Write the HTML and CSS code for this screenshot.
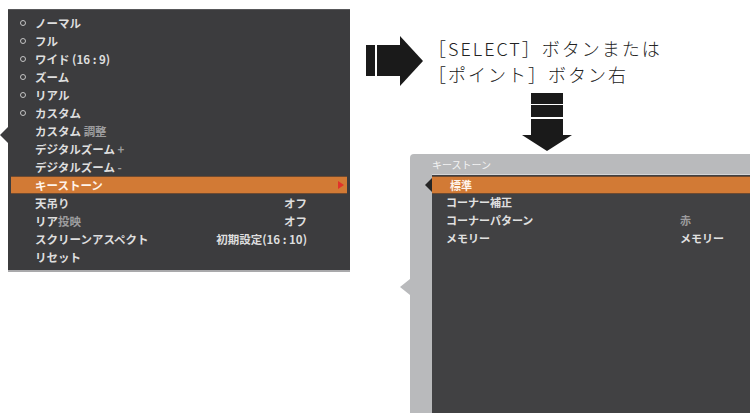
FILE: index.html
```html
<!DOCTYPE html>
<html lang="ja">
<head>
  <meta charset="UTF-8">
  <meta name="viewport" content="width=device-width, initial-scale=1.0">
  <title>キーストーン</title>
  <link rel="stylesheet" href="styles.css">
</head>
<body>
  <div class="page">
    <div class="menu">
      <ul class="rows">
        <li class="row"><span class="dot"></span><span>ノーマル</span></li>
        <li class="row"><span class="dot"></span><span>フル</span></li>
        <li class="row"><span class="dot"></span><span>ワイド (16 : 9)</span></li>
        <li class="row"><span class="dot"></span><span>ズーム</span></li>
        <li class="row"><span class="dot"></span><span>リアル</span></li>
        <li class="row"><span class="dot"></span><span>カスタム</span></li>
        <li class="row indent"><span>カスタム <span class="dim">調整</span></span></li>
        <li class="row indent"><span>デジタルズーム <span class="dim">+</span></span></li>
        <li class="row indent"><span>デジタルズーム <span class="dim">-</span></span></li>
        <li class="row indent active"><span>キーストーン</span><span class="caret"></span></li>
        <li class="row indent"><span>天吊り</span><span class="value">オフ</span></li>
        <li class="row indent"><span>リア<span class="dim">投映</span></span><span class="value">オフ</span></li>
        <li class="row indent"><span>スクリーンアスペクト</span><span class="value">初期設定(16 : 10)</span></li>
        <li class="row indent"><span>リセット</span></li>
      </ul>
    </div>

    <div class="side">
      <div class="step">
        <svg class="arrow-right" width="58" height="50" viewBox="0 0 58 50">
          <rect x="0" y="9" width="9" height="31" fill="#1a1a1a"/>
          <rect x="11" y="9" width="24" height="31" fill="#1a1a1a"/>
          <polygon points="34,0 57,25 34,50" fill="#1a1a1a"/>
        </svg>
        <div class="step-text">
          <p>［SELECT］ボタンまたは</p>
          <p>［ポイント］ボタン右</p>
        </div>
      </div>

      <svg class="arrow-down" width="50" height="58" viewBox="0 0 50 58">
        <rect x="9" y="0" width="32" height="11" fill="#1a1a1a"/>
        <rect x="9" y="12" width="32" height="12" fill="#1a1a1a"/>
        <rect x="9" y="26" width="32" height="17" fill="#1a1a1a"/>
        <polygon points="0,42 50,42 25,58" fill="#1a1a1a"/>
      </svg>

      <div class="sub-menu">
        <div class="sub-title">キーストーン</div>
        <div class="sub-body">
          <ul class="rows">
            <li class="sub-row active"><span>標準</span></li>
            <li class="sub-row"><span>コーナー補正</span></li>
            <li class="sub-row"><span>コーナーパターン</span><span class="dim">赤</span></li>
            <li class="sub-row"><span>メモリー</span><span>メモリー</span></li>
          </ul>
        </div>
      </div>
    </div>
  </div>
</body>
</html>
```

FILE: styles.css
```css
body {
  margin: 0;
  width: 750px;
  height: 413px;
  overflow: hidden;
  background: #fff;
  font-family: "Noto Sans CJK JP", "Noto Sans", sans-serif;
}
.page {
  display: flex;
  height: 413px;
  box-sizing: border-box;
  padding: 9px 0 0 8px;
}
.rows {
  list-style: none;
  margin: 0;
  padding: 0;
}

/* main menu */
.menu {
  position: relative;
  width: 342px;
  height: 263px;
  box-sizing: border-box;
  flex: none;
  padding-top: 4px;
  background: #3c3c3e;
  border-top: 1px solid #58585a;
  border-bottom: 2px solid #a9a9ab;
}
.menu::before {
  content: "";
  position: absolute;
  left: -8px;
  top: 117px;
  border-top: 8px solid transparent;
  border-bottom: 8px solid transparent;
  border-right: 8px solid #3c3c3e;
}
.row {
  display: flex;
  align-items: center;
  height: 18px;
  padding: 0 43px 0 12px;
  color: #dedede;
  font-size: 11.5px;
  font-weight: 700;
  line-height: 16px;
  white-space: nowrap;
}
.row.indent {
  padding-left: 27px;
}
.dot {
  width: 4px;
  height: 4px;
  margin-right: 9px;
  border: 1px solid #c4c4c4;
  border-radius: 50%;
  flex: none;
}
.dim {
  color: #9c9c9e;
}
.value {
  margin-left: auto;
}
.row.active {
  margin: 0 3px;
  padding: 0 3px 0 24px;
  box-sizing: border-box;
  background: #d27a35;
  border-top: 1px solid #6e4a30;
  border-bottom: 1px solid #6e4a30;
  color: #fff3ea;
}
.caret {
  margin-left: auto;
  border-top: 4px solid transparent;
  border-bottom: 4px solid transparent;
  border-left: 6px solid #e2322a;
}

/* right side */
.side {
  flex: 1;
  min-width: 0;
  display: flex;
  flex-direction: column;
}
.step {
  display: flex;
  align-items: center;
  margin: 26px 0 0 16px;
}
.arrow-right {
  flex: none;
}
.step-text {
  margin-left: 4px;
  color: #222;
  font-size: 18px;
  font-weight: 300;
  letter-spacing: 2px;
  line-height: 26px;
  white-space: nowrap;
}
.step-text p {
  margin: 0;
}
.arrow-down {
  margin: 6px 0 0 172px;
  flex: none;
}
.sub-menu {
  position: relative;
  flex: 1;
  margin: 3px 0 0 60px;
  padding-left: 22px;
  display: flex;
  flex-direction: column;
  background: #b9babc;
  border-top-left-radius: 4px;
}
.sub-menu::before {
  content: "";
  position: absolute;
  left: -10px;
  top: 125px;
  border-top: 8px solid transparent;
  border-bottom: 8px solid transparent;
  border-right: 10px solid #b9babc;
}
.sub-title {
  height: 20px;
  line-height: 21px;
  color: #f4f4f4;
  font-size: 10px;
}
.sub-body {
  flex: 1;
  padding-top: 1px;
  background: #414143;
  border-top: 1px solid #d4d4d6;
}
.sub-row {
  position: relative;
  display: grid;
  grid-template-columns: 234px 1fr;
  height: 18px;
  padding-left: 14px;
  box-sizing: border-box;
  color: #e0e0e0;
  font-size: 11px;
  font-weight: 700;
  line-height: 16px;
  white-space: nowrap;
}
.sub-row.active {
  padding-left: 18px;
  background: #d27a35;
  border-top: 1px solid #6e4a30;
  border-bottom: 1px solid #6e4a30;
  color: #fff3ea;
}
.sub-row.active::before {
  content: "";
  position: absolute;
  left: -7px;
  top: 1px;
  border-top: 7px solid transparent;
  border-bottom: 7px solid transparent;
  border-right: 7px solid #262626;
}
```
